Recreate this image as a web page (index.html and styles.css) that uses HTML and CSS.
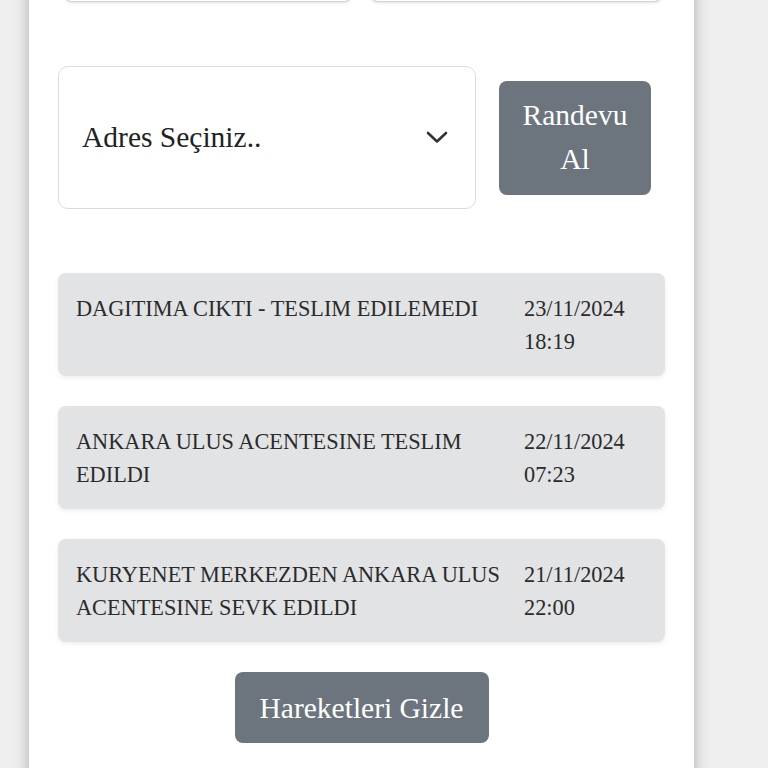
FILE: index.html
```html
<!DOCTYPE html>
<html lang="tr">
<head>
<meta charset="utf-8">
<title>Kargo Takip</title>
<link rel="stylesheet" href="styles.css">
</head>
<body>
<main class="panel">
  <div class="top-row">
    <div class="top-input"></div>
    <div class="top-input"></div>
  </div>

  <div class="address-row">
    <div class="select">
      <span class="select-text">Adres Seçiniz..</span>
      <svg class="chevron" width="22" height="13" viewBox="0 0 22 13" aria-hidden="true">
        <path d="M2 2 L11 10.5 L20 2" fill="none" stroke="#333" stroke-width="2.6" stroke-linecap="round" stroke-linejoin="round"/>
      </svg>
    </div>
    <button class="btn btn-randevu">Randevu<br>Al</button>
  </div>

  <div class="events">
    <div class="event">
      <div class="event-text">DAGITIMA CIKTI - TESLIM EDILEMEDI</div>
      <div class="event-date">23/11/2024<br>18:19</div>
    </div>
    <div class="event">
      <div class="event-text">ANKARA ULUS ACENTESINE TESLIM EDILDI</div>
      <div class="event-date">22/11/2024<br>07:23</div>
    </div>
    <div class="event">
      <div class="event-text">KURYENET MERKEZDEN ANKARA ULUS ACENTESINE SEVK EDILDI</div>
      <div class="event-date">21/11/2024<br>22:00</div>
    </div>
  </div>

  <div class="footer">
    <button class="btn btn-hide">Hareketleri Gizle</button>
  </div>
</main>
</body>
</html>
```

FILE: styles.css
```css
html, body {
  margin: 0;
  padding: 0;
  height: 768px;
  overflow: hidden;
}

body {
  background: #efefef;
  font-family: "Liberation Serif", "Times New Roman", serif;
  color: #2b2b2b;
}

.panel {
  margin: -39px 0 0 29px;
  width: 665px;
  height: 900px;
  box-sizing: border-box;
  padding: 0 29px;
  background: #fff;
  box-shadow: 0 0 14px rgba(0, 0, 0, 0.28);
}

.top-row {
  display: grid;
  grid-template-columns: 288px 292px;
  column-gap: 18px;
  padding: 0 3px 0 6px;
}

.top-input {
  height: 40px;
  border: 1px solid #d2d2d2;
  border-top: none;
  border-radius: 0 0 8px 8px;
  box-shadow: 0 1px 3px rgba(0, 0, 0, 0.12);
  background: #fff;
}

.address-row {
  display: flex;
  align-items: center;
  gap: 23px;
  margin-top: 64px;
}

.select {
  width: 418px;
  height: 143px;
  box-sizing: border-box;
  border: 1.5px solid #dcdcdc;
  border-radius: 10px;
  display: flex;
  align-items: center;
  justify-content: space-between;
  padding: 0 27px 0 23px;
}

.select-text {
  font-size: 29.5px;
  color: #222;
}

.chevron {
  display: block;
}

.btn {
  font-family: "Liberation Serif", "Times New Roman", serif;
  font-size: 29.5px;
  line-height: 44px;
  color: #fff;
  background: #6c757d;
  border: none;
  border-radius: 8px;
}

.btn-randevu {
  width: 152px;
  height: 114px;
  padding: 12px 8px 14px;
}

.events {
  display: flex;
  flex-direction: column;
  gap: 30px;
  margin-top: 64px;
}

.event {
  display: grid;
  grid-template-columns: 1fr 123px;
  background: #e2e3e5;
  border-radius: 8px;
  padding: 19px 18px 18px;
  box-shadow: 0 2px 5px rgba(0, 0, 0, 0.07);
  font-size: 22.3px;
  line-height: 33px;
  color: #2b2b2b;
  min-height: 66px;
}

.event-text {
  padding-right: 16px;
}

.footer {
  display: flex;
  justify-content: center;
  margin-top: 30px;
}

.btn-hide {
  width: 254px;
  height: 71px;
  padding: 13px 12px;
}
```
